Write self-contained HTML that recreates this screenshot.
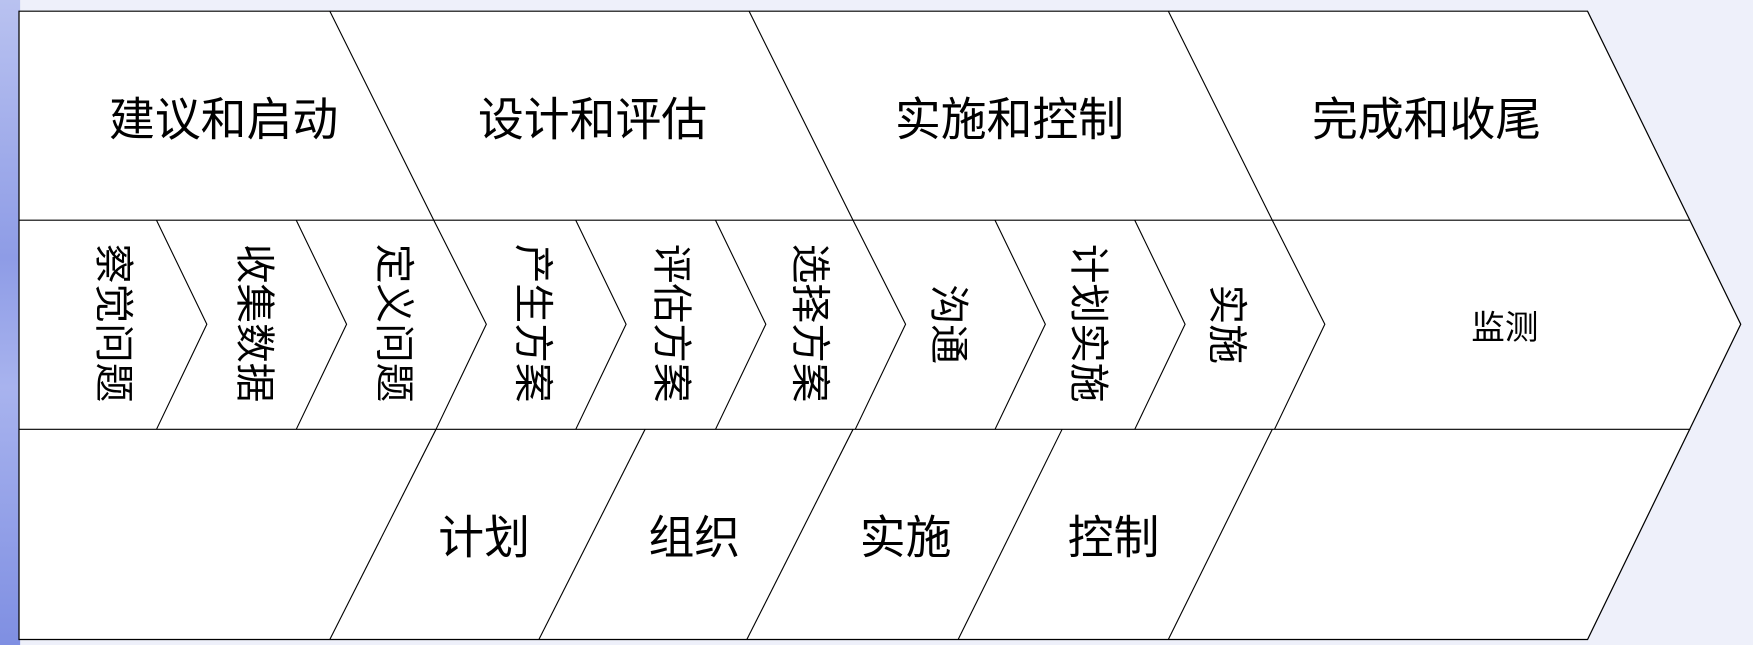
<!DOCTYPE html>
<html><head><meta charset="utf-8"><style>
html,body{margin:0;padding:0;width:1753px;height:645px;overflow:hidden;background:#eef0fa;}
#w{position:absolute;left:0;top:0;width:1568px;height:577px;transform:scale(1.118);transform-origin:0 0;}
.bg{position:absolute;left:0;top:0;width:18px;height:577px;background:linear-gradient(180deg,#b9c2f0 0%,#8e9ce6 40%,#a8b3ee 60%,#7f8fe2 100%);}
.t{position:absolute;font-family:"Liberation Sans","Noto Sans CJK SC",sans-serif;color:#000;white-space:nowrap;transform:translate(-50%,-50%);}
.big{font-size:41px;}
.mid{font-size:30px;}
.v{writing-mode:vertical-rl;text-orientation:sideways;font-size:35.5px;}
</style></head><body><div id="w">
<div class="bg"></div>
<svg width="1568" height="577" style="position:absolute;left:0;top:0">
<polygon points="17,10 1420,10 1557,290 1420,572 17,572" fill="#fff" stroke="#000" stroke-width="1.1"/>
<g stroke="#000" stroke-width="1" fill="none">
<line x1="17" y1="197" x2="1512" y2="197"/>
<line x1="17" y1="384" x2="1512" y2="384"/>
<polyline points="295,10 388,197 435,290 390,384"/>
<polyline points="670,10 763,197 810,290 765,384"/>
<polyline points="1045,10 1138,197 1185,290 1140,384"/>
<polyline points="140,197 185,290 140,384"/>
<polyline points="265,197 310,290 265,384"/>
<polyline points="515,197 560,290 515,384"/>
<polyline points="640,197 685,290 640,384"/>
<polyline points="890,197 935,290 890,384"/>
<polyline points="1015,197 1060,290 1015,384"/>
<line x1="390" y1="384" x2="295" y2="572"/>
<line x1="577" y1="384" x2="482" y2="572"/>
<line x1="763" y1="384" x2="668" y2="572"/>
<line x1="950" y1="384" x2="857" y2="572"/>
<line x1="1138" y1="384" x2="1045" y2="572"/>
</g>
</svg>
<div class="t big" style="left:200px;top:103px">建议和启动</div>
<div class="t big" style="left:530px;top:103px">设计和评估</div>
<div class="t big" style="left:903px;top:103px">实施和控制</div>
<div class="t big" style="left:1276px;top:103px">完成和收尾</div>
<div class="t v" style="left:104px;top:289px">察觉问题</div>
<div class="t v" style="left:230px;top:289px">收集数据</div>
<div class="t v" style="left:355px;top:289px">定义问题</div>
<div class="t v" style="left:479px;top:289px">产生方案</div>
<div class="t v" style="left:603px;top:289px">评估方案</div>
<div class="t v" style="left:727px;top:289px">选择方案</div>
<div class="t v" style="left:851px;top:290px">沟通</div>
<div class="t v" style="left:976px;top:289px">计划实施</div>
<div class="t v" style="left:1100px;top:290px">实施</div>
<div class="t mid" style="left:1346px;top:290px">监测</div>
<div class="t big" style="left:433px;top:477px">计划</div>
<div class="t big" style="left:621px;top:477px">组织</div>
<div class="t big" style="left:810px;top:477px">实施</div>
<div class="t big" style="left:996px;top:477px">控制</div>
</div></body></html>
